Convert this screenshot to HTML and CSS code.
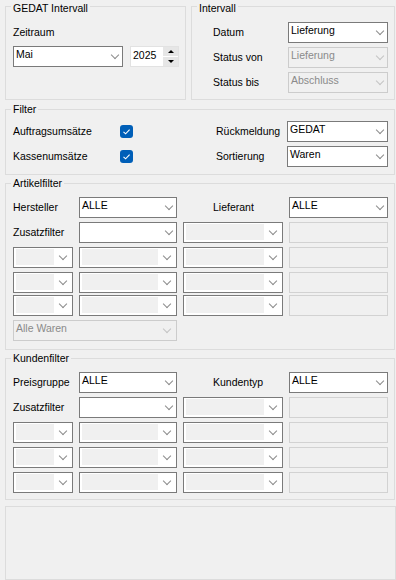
FILE: index.html
```html
<!DOCTYPE html>
<html lang="de">

<head>
    <meta charset="UTF-8">
    <meta name="viewport" content="width=device-width, initial-scale=1.0">
    <title>Umsatzfilter</title>
    <link rel="stylesheet" href="styles.css">
</head>

<body>
    <div class="window">
        <div class="top-row">
            <!-- GEDAT Intervall -->
            <section class="group top gedat">
                <div class="group-title">GEDAT Intervall</div>
                <div class="gedat-body">
                    <div class="caption">Zeitraum</div>
                    <div class="zeitraum-row">
                        <div class="combo month"><span class="value">Mai</span></div>
                        <div class="spinner">
                            <span class="value">2025</span>
                            <span class="spin-buttons">
                                <span class="spin up"></span>
                                <span class="spin down"></span>
                            </span>
                        </div>
                    </div>
                </div>
            </section>

            <!-- Intervall -->
            <section class="group top intervall">
                <div class="group-title">Intervall</div>
                <div class="intervall-grid">
                    <span class="label">Datum</span>
                    <div class="combo"><span class="value">Lieferung</span></div>
                    <span class="label">Status von</span>
                    <div class="combo disabled"><span class="value">Lieferung</span></div>
                    <span class="label">Status bis</span>
                    <div class="combo disabled"><span class="value">Abschluss</span></div>
                </div>
            </section>
        </div>

        <!-- Filter -->
        <section class="group filter">
            <div class="group-title">Filter</div>
            <div class="filter-grid">
                <span class="label">Auftragsumsätze</span>
                <span class="check-cell">
                    <span class="check"><svg width="13" height="13" viewBox="0 0 13 13"><path d="M3.5 6.8 L5.6 8.8 L9.6 4.6" fill="none" stroke="#fff" stroke-width="1.1"/></svg></span>
                </span>
                <span class="label">Rückmeldung</span>
                <div class="combo"><span class="value">GEDAT</span></div>

                <span class="label">Kassenumsätze</span>
                <span class="check-cell">
                    <span class="check"><svg width="13" height="13" viewBox="0 0 13 13"><path d="M3.5 6.8 L5.6 8.8 L9.6 4.6" fill="none" stroke="#fff" stroke-width="1.1"/></svg></span>
                </span>
                <span class="label">Sortierung</span>
                <div class="combo"><span class="value">Waren</span></div>
            </div>
        </section>

        <!-- Artikelfilter -->
        <section class="group artikel">
            <div class="group-title">Artikelfilter</div>
            <div class="select-grid artikel-grid">
                <span class="label">Hersteller</span>
                <div class="combo"><span class="value">ALLE</span></div>
                <span class="label indent">Lieferant</span>
                <div class="combo"><span class="value">ALLE</span></div>

                <span class="label">Zusatzfilter</span>
                <div class="combo"></div>
                <div class="combo locked"></div>
                <div class="field"></div>

                <div class="combo locked"></div>
                <div class="combo locked"></div>
                <div class="combo locked"></div>
                <div class="field"></div>

                <div class="combo locked"></div>
                <div class="combo locked"></div>
                <div class="combo locked"></div>
                <div class="field"></div>

                <div class="combo locked"></div>
                <div class="combo locked"></div>
                <div class="combo locked"></div>
                <div class="field"></div>

                <div class="combo disabled wide"><span class="value">Alle Waren</span></div>
            </div>
        </section>

        <!-- Kundenfilter -->
        <section class="group kunden">
            <div class="group-title">Kundenfilter</div>
            <div class="select-grid kunden-grid">
                <span class="label">Preisgruppe</span>
                <div class="combo"><span class="value">ALLE</span></div>
                <span class="label indent">Kundentyp</span>
                <div class="combo"><span class="value">ALLE</span></div>

                <span class="label">Zusatzfilter</span>
                <div class="combo"></div>
                <div class="combo locked"></div>
                <div class="field"></div>

                <div class="combo locked"></div>
                <div class="combo locked"></div>
                <div class="combo locked"></div>
                <div class="field"></div>

                <div class="combo locked"></div>
                <div class="combo locked"></div>
                <div class="combo locked"></div>
                <div class="field"></div>

                <div class="combo locked"></div>
                <div class="combo locked"></div>
                <div class="combo locked"></div>
                <div class="field"></div>
            </div>
        </section>

        <!-- empty panel at the bottom -->
        <div class="bottom-panel"></div>
    </div>
</body>

</html>
```

FILE: styles.css
```css
body {
    margin: 0;
    background-color: #f0f0f0;
    font-family: "Liberation Sans", Arial, sans-serif;
    font-size: 10.5px;
    line-height: 13px;
    color: #000;
}

.window {
    width: 396px;
    height: 580px;
    box-sizing: border-box;
    padding: 6px 0 0 5px;
    overflow: hidden;
}

/* Group boxes */
.group {
    box-sizing: border-box;
    border: 1px solid #dcdcdc;
    width: 390px;
}

.group-title {
    width: fit-content;
    margin: -7px 0 0 5px;
    padding: 0 2px;
    background-color: #f0f0f0;
    white-space: nowrap;
}

.top .group-title {
    margin-top: -5px;
}

.top-row {
    display: flex;
    gap: 5px;
}

.gedat {
    width: 181px;
    height: 94px;
}

.intervall {
    width: 204px;
    height: 94px;
}

.filter {
    height: 66px;
    margin-top: 9px;
}

.artikel {
    height: 167px;
    margin-top: 8px;
}

.kunden {
    height: 142px;
    margin-top: 8px;
}

.bottom-panel {
    box-sizing: border-box;
    width: 391px;
    height: 74px;
    margin-top: 6px;
    border: 1px solid #dcdcdc;
}

/* GEDAT Intervall */
.gedat-body {
    padding-left: 7px;
}

.caption {
    margin-top: 11px;
}

.zeitraum-row {
    display: flex;
    gap: 7px;
    margin-top: 7px;
}

.combo.month {
    width: 110px;
}

.spinner {
    display: flex;
    width: 49px;
    height: 21px;
    box-sizing: border-box;
    border: 1px solid #e2e2e2;
    background-color: #fff;
    padding-left: 2px;
}

.spinner .value {
    margin-top: 2px;
}

.spin-buttons {
    margin-left: auto;
    width: 15px;
    display: flex;
    flex-direction: column;
    gap: 1px;
}

.spin {
    flex: 1;
    background-color: #e6e6e6;
    display: flex;
    align-items: center;
    justify-content: center;
}

.spin::before {
    content: "";
    border-left: 3px solid transparent;
    border-right: 3px solid transparent;
    border-bottom: 3px solid #000;
}

.spin.down::before {
    border-bottom: 0;
    border-top: 3px solid #000;
}

/* Intervall */
.intervall-grid {
    display: grid;
    grid-template-columns: 75px 100px;
    grid-auto-rows: 21px;
    row-gap: 4px;
    padding-left: 21px;
    margin-top: 7px;
}

/* Filter */
.filter-grid {
    display: grid;
    grid-template-columns: 107px 96px 71px 101px;
    grid-auto-rows: 21px;
    row-gap: 4px;
    padding-left: 7px;
    margin-top: 5px;
}

.check-cell {
    display: flex;
    align-items: center;
}

.check {
    width: 13px;
    height: 13px;
    border-radius: 3px;
    background-color: #005fb8;
    display: flex;
}

/* Artikel- / Kundenfilter */
.select-grid {
    display: grid;
    grid-template-columns: 60px 98px 100px 99px;
    column-gap: 6px;
    align-items: start;
    padding-left: 7px;
    margin-top: 7px;
}

.artikel-grid {
    grid-template-rows: 25px 25px 25px 23px 25px 21px;
}

.kunden-grid {
    grid-template-rows: 25px 25px 25px 25px 21px;
}

.label {
    display: flex;
    align-items: center;
    height: 21px;
    white-space: nowrap;
}

.label.indent {
    padding-left: 30px;
}

/* Controls */
.combo {
    position: relative;
    height: 21px;
    box-sizing: border-box;
    border: 1px solid #7a7a7a;
    background-color: #fff;
    padding-left: 2px;
    white-space: nowrap;
}

.combo .value {
    display: block;
    margin-top: 1px;
}

.combo::after {
    content: "";
    position: absolute;
    right: 4px;
    top: 5px;
    width: 5px;
    height: 5px;
    border-right: 1px solid #8c8c8c;
    border-bottom: 1px solid #8c8c8c;
    transform: rotate(45deg);
}

.combo.locked::before {
    content: "";
    position: absolute;
    left: 2px;
    top: 1px;
    right: 18px;
    bottom: 2px;
    background-color: #f0f0f0;
}

.combo.locked::after {
    right: 6px;
}

.combo.disabled {
    border-color: #cccccc;
    background-color: #f0f0f0;
    color: #8a8a8a;
}

.combo.disabled::after {
    border-color: #c4c4c4;
}

.combo.wide {
    grid-column: 1 / 3;
}

.combo.wide::after {
    right: 6px;
}

.field {
    height: 21px;
    box-sizing: border-box;
    border: 1px solid #d2d2d2;
    background-color: #f0f0f0;
}
```
